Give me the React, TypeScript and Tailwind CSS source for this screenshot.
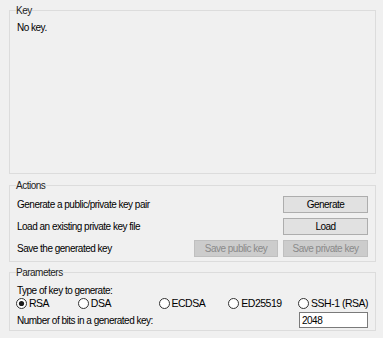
import React from "react";

const font = { fontFamily: '"Liberation Sans", Arial, sans-serif' };

function Radio({ label, checked, width }: { label: string; checked?: boolean; width?: string }) {
  return (
    <label className={`flex items-center h-[13px] whitespace-nowrap ${width ?? ""}`}>
      <svg width="11" height="11" viewBox="0 0 11 11" className="shrink-0">
        <circle cx="5.5" cy="5.5" r="5" fill="#ffffff" stroke="#333333" strokeWidth="1" />
        {checked && <circle cx="5.5" cy="5.5" r="2.6" fill="#1a1a1a" />}
      </svg>
      <span className="ml-[2px] text-[10.5px]">{label}</span>
    </label>
  );
}

function Button({ children, disabled, className }: { children: React.ReactNode; disabled?: boolean; className?: string }) {
  return (
    <button
      disabled={disabled}
      className={
        "h-[17px] border text-[10px] tracking-[-0.5px] leading-none flex items-center justify-center whitespace-nowrap " +
        (disabled
          ? "bg-[#cccccc] border-[#bfbfbf] text-[#8a8a8a] "
          : "bg-[#e1e1e1] border-[#adadad] text-black ") +
        (className ?? "")
      }
    >
      {children}
    </button>
  );
}

export default function App() {
  return (
    <div
      className="w-[383px] h-[338px] bg-[#f0f0f0] pl-[9px] pr-[7px] pt-[4px] text-[10px] tracking-[-0.5px] leading-[13px] text-black flex flex-col"
      style={font}
    >
      <fieldset className="h-[170px] min-w-0 border border-[#dcdcdc] px-0 m-0">
        <legend className="ml-[6px] px-0 leading-[13px] text-[#222]">Key</legend>
        <div className="pl-[7px] pt-[4px]">No key.</div>
      </fieldset>

      <fieldset className="mt-[5px] min-w-0 border border-[#dcdcdc] px-0 m-0">
        <legend className="ml-[6px] px-0 leading-[13px] text-[#222]">Actions</legend>
        <div className="flex flex-col gap-[5px] pt-[4px] pb-[4px] pl-[7px] pr-[7px]">
          <div className="flex items-center justify-between h-[17px]">
            <span>Generate a public/private key pair</span>
            <Button className="w-[85px]">Generate</Button>
          </div>
          <div className="flex items-center justify-between h-[17px]">
            <span>Load an existing private key file</span>
            <Button className="w-[85px]">Load</Button>
          </div>
          <div className="flex items-center justify-between h-[17px]">
            <span>Save the generated key</span>
            <div className="flex gap-[5px]">
              <Button disabled className="w-[84px]">Save public key</Button>
              <Button disabled className="w-[85px]">Save private key</Button>
            </div>
          </div>
        </div>
      </fieldset>

      <fieldset className="mt-[4px] min-w-0 border border-[#dcdcdc] px-0 m-0">
        <legend className="ml-[6px] px-0 leading-[13px] text-[#222]">Parameters</legend>
        <div className="pt-[5px] pb-[2px] pl-[6px] pr-[7px]">
          <div className="pl-[1px]">Type of key to generate:</div>
          <div className="flex items-center">
            <Radio label="RSA" checked width="w-[62px]" />
            <Radio label="DSA" width="w-[81px]" />
            <Radio label="ECDSA" width="w-[70px]" />
            <Radio label="ED25519" width="w-[70px]" />
            <Radio label="SSH-1 (RSA)" />
          </div>
          <div className="mt-[2px] flex items-center justify-between h-[16px]">
            <span className="pl-[1px]">Number of bits in a generated key:</span>
            <input
              readOnly
              value="2048"
              className="w-[69px] h-[16px] border border-[#7a7a7a] bg-white pl-[2px] text-[10px] tracking-[-0.5px] outline-none"
              style={font}
            />
          </div>
        </div>
      </fieldset>
    </div>
  );
}
